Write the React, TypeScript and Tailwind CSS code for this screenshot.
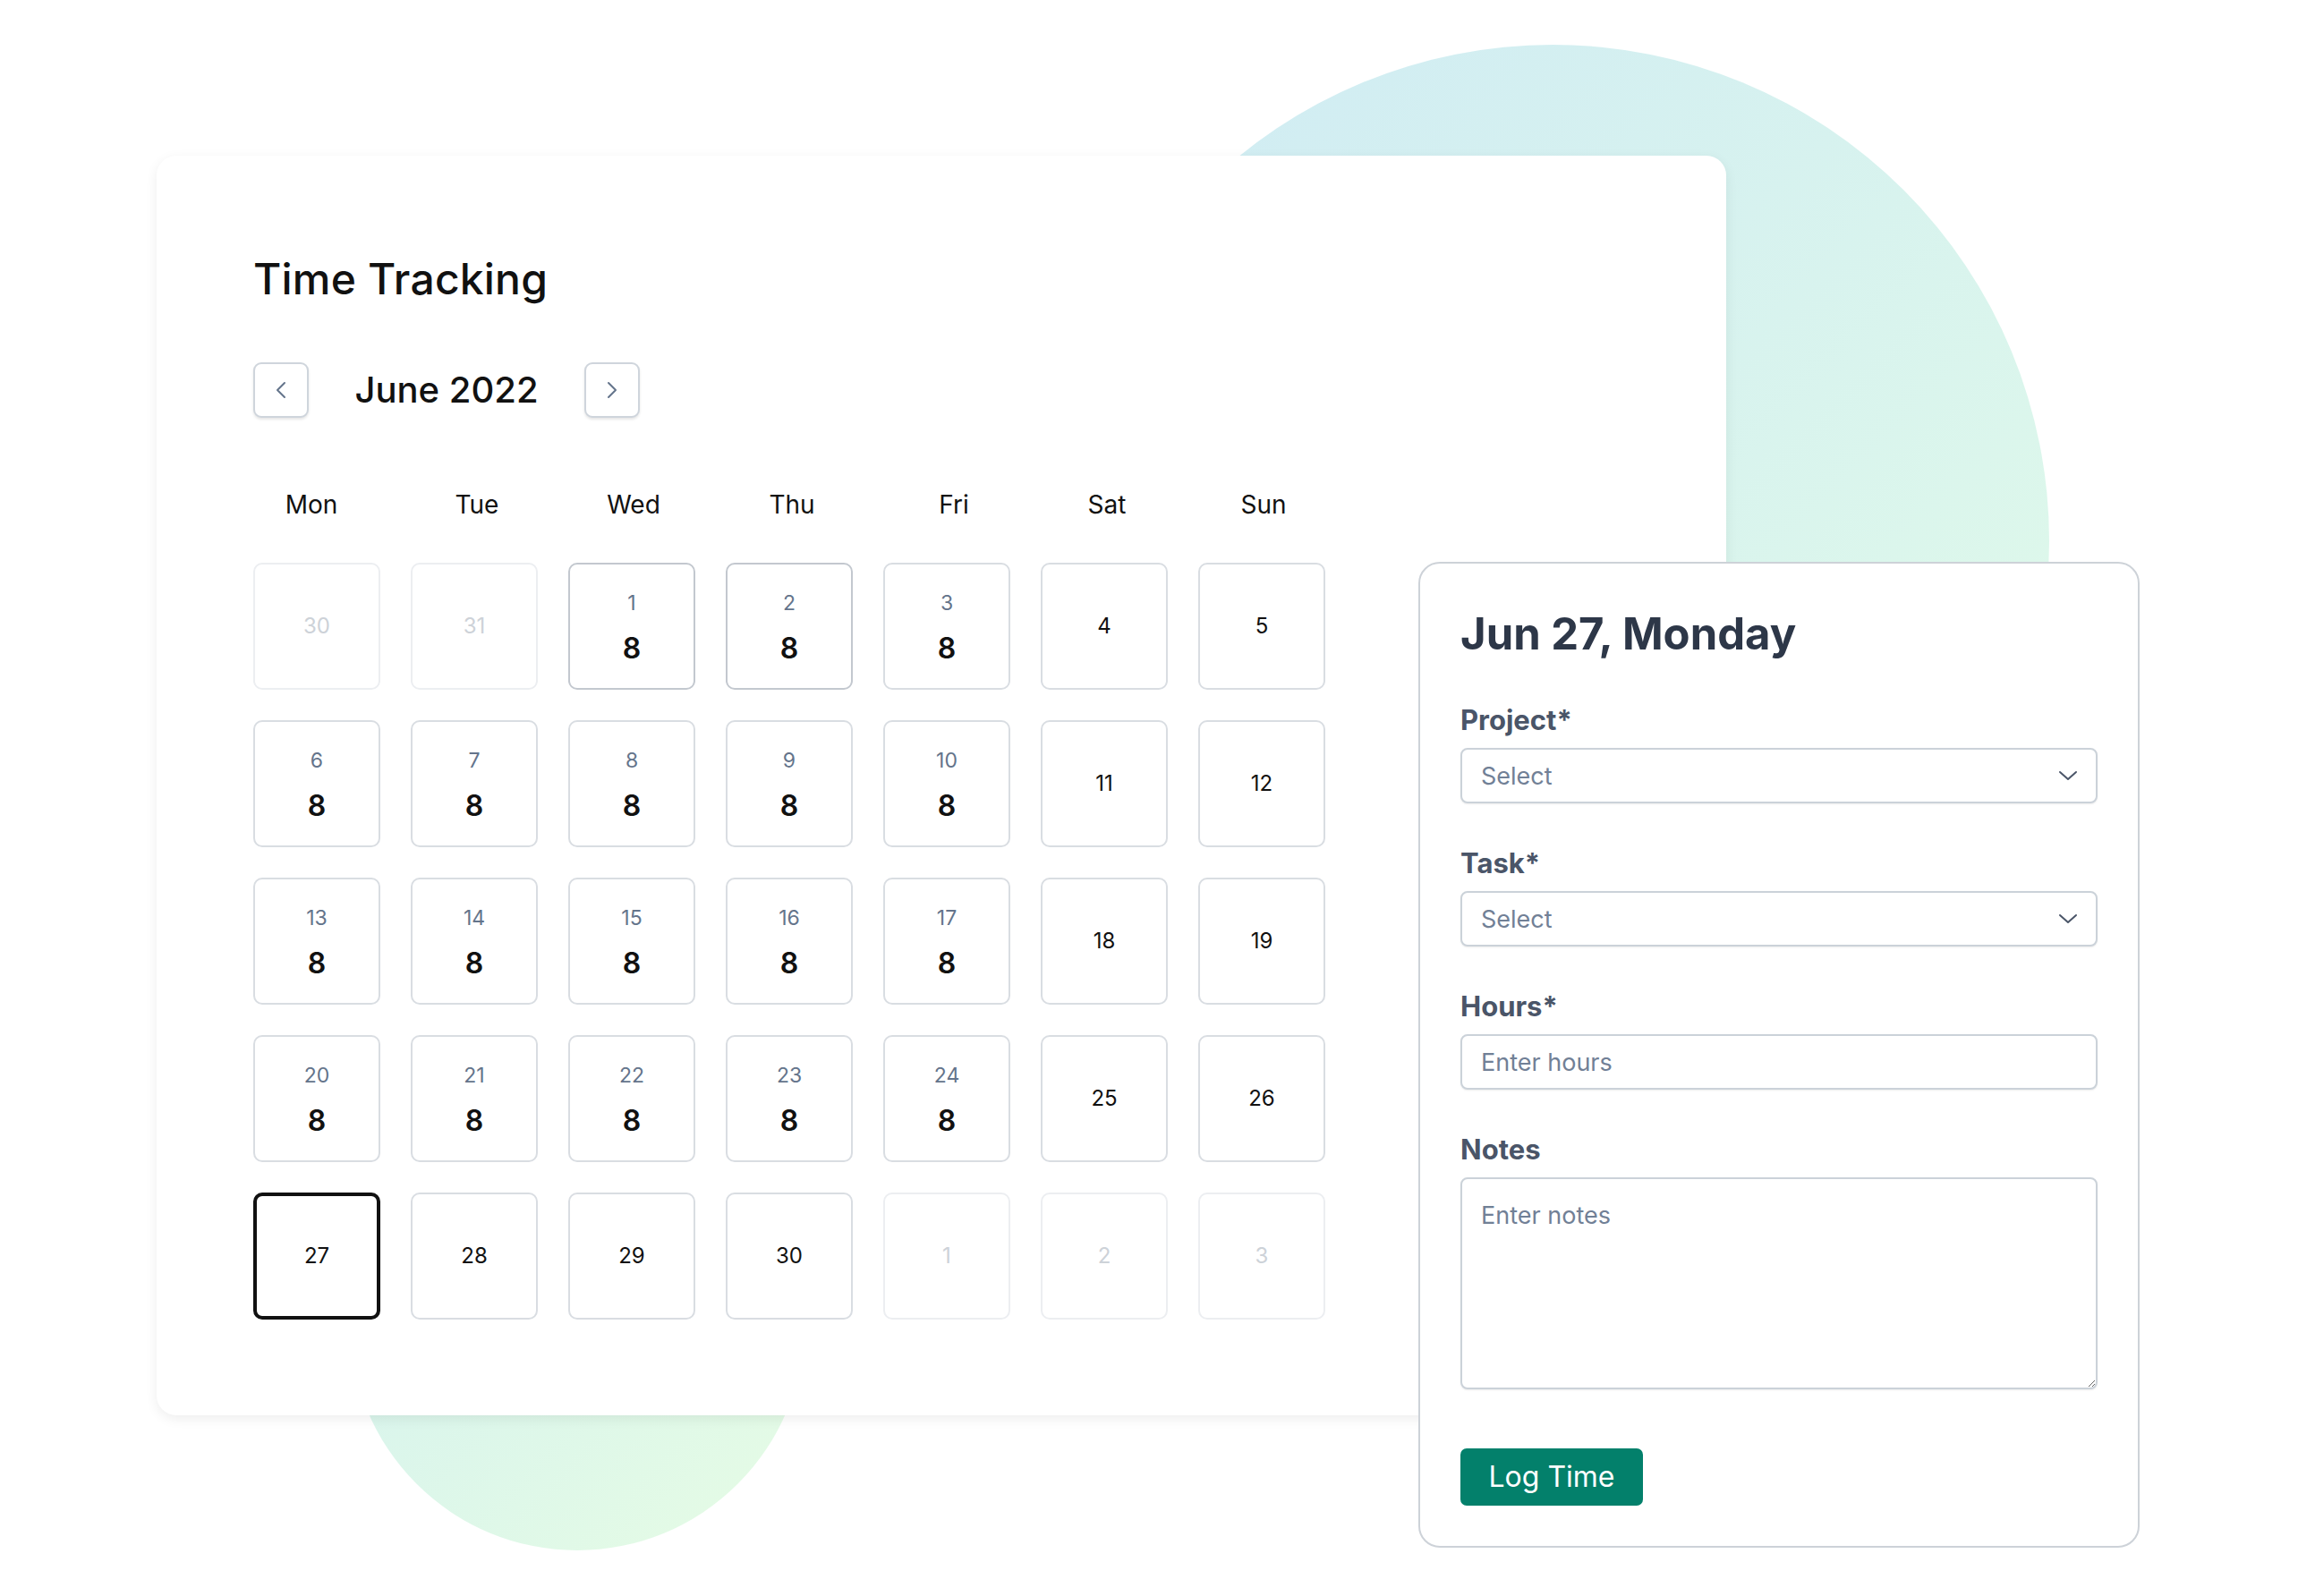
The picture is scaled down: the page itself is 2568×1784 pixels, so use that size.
import React from "react";

type Cell = {
  day: number;
  hours?: number;
  out?: boolean;
  dark?: boolean;
  selected?: boolean;
};

const rows: Cell[][] = [
  [
    { day: 30, out: true },
    { day: 31, out: true },
    { day: 1, hours: 8, dark: true },
    { day: 2, hours: 8, dark: true },
    { day: 3, hours: 8 },
    { day: 4 },
    { day: 5 },
  ],
  [
    { day: 6, hours: 8 },
    { day: 7, hours: 8 },
    { day: 8, hours: 8 },
    { day: 9, hours: 8 },
    { day: 10, hours: 8 },
    { day: 11 },
    { day: 12 },
  ],
  [
    { day: 13, hours: 8 },
    { day: 14, hours: 8 },
    { day: 15, hours: 8 },
    { day: 16, hours: 8 },
    { day: 17, hours: 8 },
    { day: 18 },
    { day: 19 },
  ],
  [
    { day: 20, hours: 8 },
    { day: 21, hours: 8 },
    { day: 22, hours: 8 },
    { day: 23, hours: 8 },
    { day: 24, hours: 8 },
    { day: 25 },
    { day: 26 },
  ],
  [
    { day: 27, selected: true },
    { day: 28 },
    { day: 29 },
    { day: 30 },
    { day: 1, out: true },
    { day: 2, out: true },
    { day: 3, out: true },
  ],
];

const days: { name: string; cls: string }[] = [
  { name: "Mon", cls: "-translate-x-[6px]" },
  { name: "Tue", cls: "translate-x-[3px]" },
  { name: "Wed", cls: "translate-x-[2px]" },
  { name: "Thu", cls: "translate-x-[3px]" },
  { name: "Fri", cls: "translate-x-[8px]" },
  { name: "Sat", cls: "translate-x-[3px]" },
  { name: "Sun", cls: "translate-x-[2px]" },
];

function Chevron({ dir }: { dir: "left" | "right" }) {
  return (
    <svg width="14" height="20" viewBox="0 0 14 20" fill="none">
      <path
        d={dir === "left" ? "M11 2 L3 10 L11 18" : "M3 2 L11 10 L3 18"}
        stroke="#64748b"
        strokeWidth="2"
        strokeLinecap="round"
        strokeLinejoin="round"
      />
    </svg>
  );
}

function ChevronDown() {
  return (
    <svg width="22" height="14" viewBox="0 0 22 14" fill="none">
      <path
        d="M2 3 L11 11 L20 3"
        stroke="#4a5568"
        strokeWidth="2"
        strokeLinecap="round"
        strokeLinejoin="round"
      />
    </svg>
  );
}

function DayCell({ c }: { c: Cell }) {
  if (c.selected) {
    return (
      <div className="w-[142px] h-[142px] rounded-[10px] border-[4px] border-[#111111] bg-white flex items-center justify-center">
        <span className="text-[24px] leading-[24px] text-[#111111]">{c.day}</span>
      </div>
    );
  }
  if (c.out) {
    return (
      <div className="w-[142px] h-[142px] rounded-[10px] border-2 border-[#eceef1] bg-white flex items-center justify-center">
        <span className="text-[24px] leading-[24px] text-[#cdd2d8]">{c.day}</span>
      </div>
    );
  }
  const border = c.dark ? "border-[#c3c8cf]" : "border-[#d9dde2]";
  if (c.hours) {
    return (
      <div
        className={`w-[142px] h-[142px] rounded-[10px] border-2 ${border} bg-white flex flex-col items-center justify-center gap-[23px] pt-[2px]`}
      >
        <span className="text-[23px] leading-[24px] text-[#64748b]">{c.day}</span>
        <span className="text-[32px] leading-[32px] font-semibold text-[#111111]">{c.hours}</span>
      </div>
    );
  }
  return (
    <div
      className={`w-[142px] h-[142px] rounded-[10px] border-2 ${border} bg-white flex items-center justify-center`}
    >
      <span className="text-[24px] leading-[24px] text-[#111111]">{c.day}</span>
    </div>
  );
}

function Label({ children }: { children: React.ReactNode }) {
  return (
    <div className="text-[31px] leading-[30px] font-bold text-[#4a5568] mb-[16px]">{children}</div>
  );
}

function SelectBox() {
  return (
    <div className="h-[62px] rounded-[8px] border-2 border-[#cbd2d9] bg-white shadow-[0_1px_2px_rgba(0,0,0,0.08)] flex items-center justify-between pl-[21px] pr-[20px]">
      <span className="text-[27px] text-[#718096] translate-y-[1px]">Select</span>
      <ChevronDown />
    </div>
  );
}

export default function App() {
  return (
    <div
      className="relative w-[2568px] h-[1784px] bg-white overflow-hidden"
      style={{ fontFamily: "Inter, 'Noto Sans', 'Liberation Sans', sans-serif" }}
    >
      {/* decorative circles */}
      <div className="absolute left-[1180px] top-[50px] w-[1110px] h-[1110px] rounded-full bg-gradient-to-br from-[#cfebf4] to-[#e1fbe8]" />
      <div className="absolute left-[391px] top-[1225px] w-[508px] h-[508px] rounded-full bg-gradient-to-br from-[#d3f1f0] to-[#e6fce4]" />

      <div className="relative flex items-start pl-[175px] pt-[174px]">
        {/* main card */}
        <div className="w-[1754px] h-[1408px] shrink-0 bg-white rounded-[22px] shadow-[0_4px_14px_rgba(0,0,0,0.07)] pl-[108px] pt-[114px]">
          <h1 className="text-[48px] leading-[48px] font-medium text-[#111111] tracking-[0.2px]">
            Time Tracking
          </h1>

          <div className="flex items-center mt-[69px]">
            <button className="w-[62px] h-[62px] rounded-[9px] border-2 border-[#cfd5dc] bg-white shadow-[0_2px_3px_rgba(0,0,0,0.1)] flex items-center justify-center">
              <Chevron dir="left" />
            </button>
            <div className="w-[308px] text-center text-[40px] leading-[40px] font-medium text-[#111111]">
              June 2022
            </div>
            <button className="w-[62px] h-[62px] rounded-[9px] border-2 border-[#cfd5dc] bg-white shadow-[0_2px_3px_rgba(0,0,0,0.1)] flex items-center justify-center">
              <Chevron dir="right" />
            </button>
          </div>

          <div className="grid grid-cols-[repeat(7,142px)] gap-x-[34px] mt-[83px]">
            {days.map((d) => (
              <div key={d.name} className={`text-center text-[28px] leading-[28px] text-[#111111] ${d.cls}`}>
                {d.name}
              </div>
            ))}
          </div>

          <div className="grid grid-cols-[repeat(7,142px)] gap-[34px] mt-[51px]">
            {rows.flat().map((c, i) => (
              <DayCell key={i} c={c} />
            ))}
          </div>
        </div>

        {/* side panel */}
        <div className="relative z-10 shrink-0 -ml-[344px] mt-[454px] w-[806px] h-[1102px] bg-white rounded-[24px] border-2 border-[#cdd2d8] px-[45px] pt-[55px] flex flex-col">
          <h2 className="text-[49px] leading-[48px] font-bold text-[#2d3748]">Jun 27, Monday</h2>

          <div className="mt-[57px]">
            <Label>Project*</Label>
            <SelectBox />
          </div>

          <div className="mt-[52px]">
            <Label>Task*</Label>
            <SelectBox />
          </div>

          <div className="mt-[52px]">
            <Label>Hours*</Label>
            <input
              placeholder="Enter hours"
              className="w-full h-[62px] rounded-[8px] border-2 border-[#cbd2d9] bg-white shadow-[0_1px_2px_rgba(0,0,0,0.08)] px-[21px] text-[27px] text-[#2d3748] placeholder:text-[#718096] outline-none"
            />
          </div>

          <div className="mt-[52px]">
            <Label>Notes</Label>
            <textarea
              placeholder="Enter notes"
              className="block w-full h-[237px] rounded-[8px] border-2 border-[#cbd2d9] bg-white shadow-[0_1px_2px_rgba(0,0,0,0.08)] px-[21px] pt-[24px] text-[27px] leading-[34px] text-[#2d3748] placeholder:text-[#718096] outline-none resize-y"
            />
          </div>

          <div className="mt-[66px]">
            <button className="h-[64px] w-[204px] rounded-[7px] bg-[#03806b] text-white text-[32px] leading-[32px]">
              Log Time
            </button>
          </div>
        </div>
      </div>
    </div>
  );
}
